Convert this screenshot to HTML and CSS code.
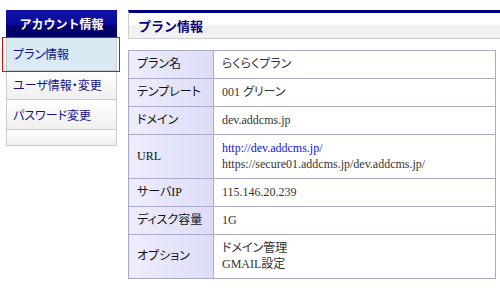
FILE: index.html
```html
<!DOCTYPE html>
<html lang="ja">
<head>
    <meta charset="UTF-8">
    <title>プラン情報</title>
    <link rel="stylesheet" href="styles.css">
</head>
<body>
    <div class="page">
        <!-- サイドメニュー -->
        <aside class="side">
            <div class="side-head">アカウント情報</div>
            <ul class="side-menu">
                <li class="current"><a href="#">プラン情報</a></li>
                <li><a href="#">ユーザ情報・変更</a></li>
                <li class="tall"><a href="#">パスワード変更</a></li>
                <li class="blank"></li>
            </ul>
        </aside>

        <!-- プラン情報 -->
        <main class="content">
            <h2 class="title">プラン情報</h2>
            <table class="plan">
                <tr>
                    <th>プラン名</th>
                    <td>らくらくプラン</td>
                </tr>
                <tr>
                    <th>テンプレート</th>
                    <td>001 グリーン</td>
                </tr>
                <tr>
                    <th>ドメイン</th>
                    <td>dev.addcms.jp</td>
                </tr>
                <tr>
                    <th>URL</th>
                    <td><a href="#">http://dev.addcms.jp/</a><br>https://secure01.addcms.jp/dev.addcms.jp/</td>
                </tr>
                <tr>
                    <th>サーバIP</th>
                    <td>115.146.20.239</td>
                </tr>
                <tr>
                    <th>ディスク容量</th>
                    <td>1G</td>
                </tr>
                <tr>
                    <th>オプション</th>
                    <td>ドメイン管理<br>GMAIL設定</td>
                </tr>
            </table>
        </main>
    </div>
</body>
</html>
```

FILE: styles.css
```css
body {
    margin: 0;
    background: #ffffff;
    overflow: hidden;
    font-family: "Noto Sans CJK JP", sans-serif;
}

.page {
    display: flex;
    align-items: flex-start;
    gap: 11px;
    padding: 10px 0 0 6px;
}

/* サイドメニュー */
.side {
    width: 111px;
    flex-shrink: 0;
}

.side-head {
    height: 28px;
    line-height: 28px;
    text-align: center;
    color: #ffffff;
    font-size: 12px;
    font-weight: bold;
    background: linear-gradient(#1212a6 0, #0b0b9a 55%, #02026c 55%, #000066 100%);
}

.side-menu {
    list-style: none;
    margin: 0;
    padding: 0;
    border: 1px solid #cccccc;
    border-top: none;
}

.side-menu li {
    border-bottom: 1px solid #cccccc;
    background: linear-gradient(#ffffff, #efefef);
}

.side-menu li:last-child {
    border-bottom: none;
}

.side-menu a {
    display: block;
    padding: 6px 6px;
    line-height: 16px;
    font-size: 12px;
    font-feature-settings: "palt";
    color: #121290;
    text-decoration: none;
}

.side-menu li.current {
    position: relative;
    background: #d9eaf5;
}

.side-menu li.current a {
    padding: 8px 6px;
}

.side-menu li.current::after {
    content: '';
    position: absolute;
    top: -1px;
    left: -5px;
    right: -4px;
    bottom: -2px;
    border: 1px solid #ff0000;
}

.side-menu li.tall a {
    padding: 7px 6px 6px;
}

.side-menu li.blank {
    height: 15px;
}

/* メイン */
.content {
    width: 368px;
    flex-shrink: 0;
}

.title {
    margin: 0 -12px 0 0;
    height: 25px;
    line-height: 25px;
    padding-left: 9px;
    border-top: 3px solid #000080;
    border-left: 1px solid #cccccc;
    border-bottom: 1px solid #cccccc;
    background: linear-gradient(#ffffff 0, #ffffff 48%, #f2f2f2 48%);
    color: #000080;
    font-size: 13px;
    font-weight: bold;
}

.plan {
    width: 368px;
    margin-top: 11px;
    border-collapse: collapse;
    border: 1px solid #aaaacc;
    font-family: "Liberation Serif", "Noto Sans CJK JP", serif;
    font-size: 12px;
    line-height: 16px;
    font-feature-settings: "palt";
}

.plan th,
.plan td {
    border: 1px solid #aaaacc;
    padding: 5px 8px 6px;
    text-align: left;
    vertical-align: middle;
}

.plan th {
    width: 68px;
    font-weight: normal;
    color: #111111;
    background: linear-gradient(to right, #ededfc, #dcdcf7);
}

.plan td {
    color: #333333;
}

.plan td a {
    color: #1010ee;
    text-decoration: none;
}
```
